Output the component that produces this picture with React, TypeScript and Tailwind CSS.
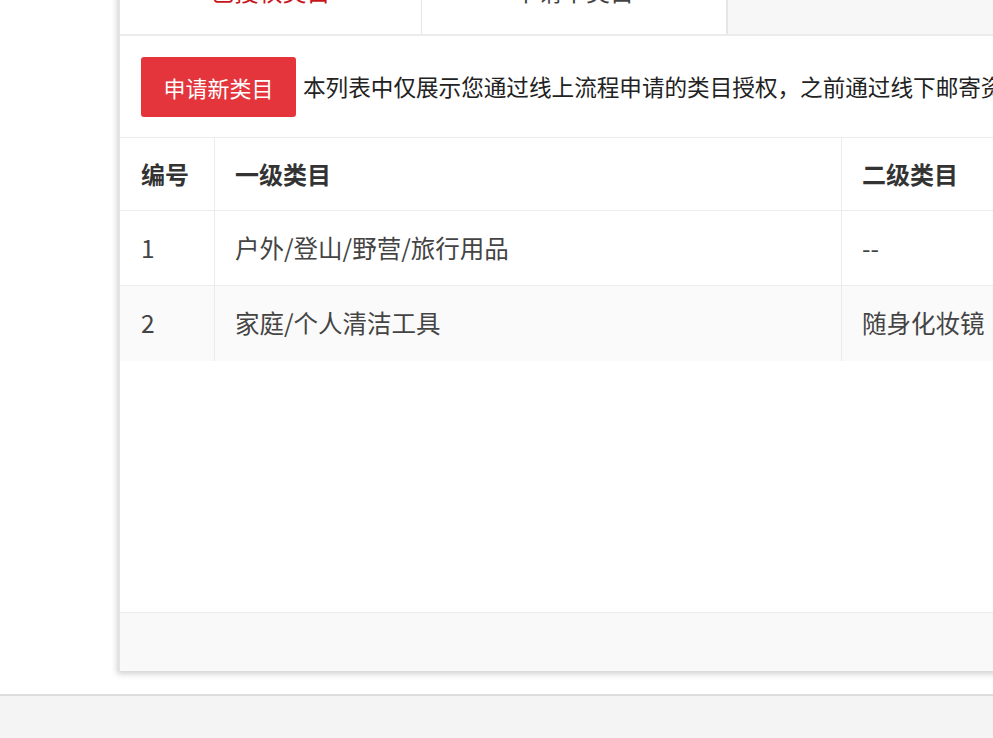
const ROWS = [
  { id: "1", first: "户外/登山/野营/旅行用品", second: "--", striped: false },
  { id: "2", first: "家庭/个人清洁工具", second: "随身化妆镜", striped: true },
];

const FONT = "font-['Noto_Sans_CJK_SC','Noto_Sans',sans-serif]";

export default function App() {
  return (
    <div className={`w-[993px] h-[738px] overflow-hidden bg-white text-[#333] ${FONT}`}>
      <div className="-mt-[40px] flex flex-col">
        {/* Card */}
        <div className="ml-[117px] w-[1000px] bg-white border-l-[3px] border-[#e3e3e3] shadow-[0_3px_6px_rgba(0,0,0,0.18)]">
          {/* Tabs */}
          <div className="flex h-[76px] bg-[#f7f7f7] border-b-[2px] border-[#ececec]">
            <div className="w-[302px] pb-[12px] bg-white border-r border-[#e6e6e6] flex items-center justify-center text-[24px] text-[#c8161d]">
              已授权类目
            </div>
            <div className="w-[306px] pb-[12px] bg-white border-r-[2px] border-[#e6e6e6] flex items-center justify-center text-[24px] text-[#444]">
              申请中类目
            </div>
            <div className="flex-1" />
          </div>

          {/* Intro */}
          <div className="flex items-center pl-[21px] pt-[21px] pb-[20px] border-b border-[#ececec] overflow-hidden">
            <button className="shrink-0 whitespace-nowrap h-[60px] px-[22.5px] rounded-[3px] bg-[#e3353b] text-white text-[22px]">
              申请新类目
            </button>
            <span className="shrink-0 ml-[7px] text-[22.6px] whitespace-nowrap text-[#222]">
              本列表中仅展示您通过线上流程申请的类目授权，之前通过线下邮寄资料申请的类目授权请联系客服
            </span>
          </div>

          {/* Table */}
          <div className="grid grid-cols-[95px_627px_1fr] h-[73px] border-b border-[#ececec] text-[24px] font-bold">
            <div className="pl-[21px] flex items-center border-r border-[#ececec]">编号</div>
            <div className="pl-[20px] flex items-center border-r border-[#ececec]">一级类目</div>
            <div className="pl-[20px] flex items-center">二级类目</div>
          </div>
          {ROWS.map((row) => (
            <div
              key={row.id}
              className={`grid grid-cols-[95px_627px_1fr] h-[75px] text-[24.5px] text-[#444] ${
                row.striped ? "bg-[#fafafa]" : "bg-white border-b border-[#ececec]"
              }`}
            >
              <div className="pl-[21px] flex items-center border-r border-[#ececec]">{row.id}</div>
              <div className="pl-[20px] flex items-center border-r border-[#ececec]">{row.first}</div>
              <div className="pl-[20px] flex items-center whitespace-nowrap">{row.second}</div>
            </div>
          ))}

          {/* Empty space */}
          <div className="h-[251px]" />

          {/* Footer */}
          <div className="h-[59px] bg-[#f9f9f9] border-t border-[#ececec]" />
        </div>

        <div className="h-[23px]" />
        <div className="h-[60px] bg-[#f4f4f4] border-t-[2px] border-[#dcdcdc]" />
      </div>
    </div>
  );
}
